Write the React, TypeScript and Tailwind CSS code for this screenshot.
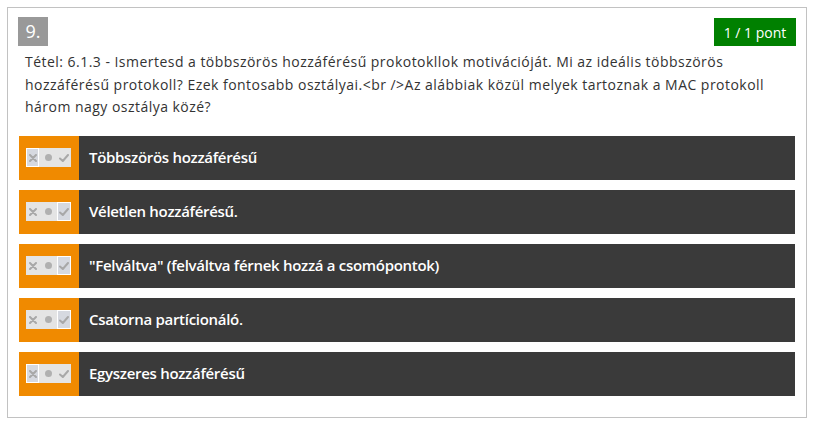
import React from 'react';

type Choice = 'no' | 'yes';

const options: { text: string; choice: Choice }[] = [
  { text: 'Többszörös hozzáférésű', choice: 'no' },
  { text: 'Véletlen hozzáférésű.', choice: 'yes' },
  { text: '"Felváltva" (felváltva férnek hozzá a csomópontok)', choice: 'yes' },
  { text: 'Csatorna partícionáló.', choice: 'yes' },
  { text: 'Egyszeres hozzáférésű', choice: 'no' },
];

const Toggle: React.FC<{ choice: Choice }> = ({ choice }) => (
  <div className="flex h-[19px] w-[45px] items-center justify-between bg-[#e4e4e4]">
    <div
      className={`flex h-[19px] w-[13px] items-center justify-center ${
        choice === 'no' ? 'border border-white bg-[#d6d9e0]' : ''
      }`}
    >
      <svg width="8" height="8" viewBox="0 0 8 8">
        <path d="M1 1 L7 7 M7 1 L1 7" stroke="#a8a8a8" strokeWidth="2" strokeLinecap="round" />
      </svg>
    </div>
    <div className="h-[7px] w-[7px] rounded-full bg-[#b0b0b0]" />
    <div
      className={`flex h-[19px] w-[14px] items-center justify-center ${
        choice === 'yes' ? 'border border-white bg-[#d6d9e0]' : ''
      }`}
    >
      <svg width="10" height="8" viewBox="0 0 10 8">
        <path d="M1 4.5 L3.8 7 L9 1" stroke="#a8a8a8" strokeWidth="2" fill="none" strokeLinecap="round" strokeLinejoin="round" />
      </svg>
    </div>
  </div>
);

const App: React.FC = () => {
  return (
    <div className="min-h-[422px] bg-white p-[7px] font-['Open_Sans',sans-serif]">
      <div className="w-[800px] h-[411px] border border-[#c2c2c2] bg-white pl-[10px] pr-[10px] pt-[9px]">
        <div className="flex items-start justify-between">
          <div className="flex h-[29px] w-[30px] items-center justify-center bg-[#999999] text-[18px] text-white">
            9.
          </div>
          <div className="mt-px flex h-[28px] w-[82px] items-center justify-center bg-[#008000] text-[14px] text-white">
            1 / 1 pont
          </div>
        </div>
        <p className="mt-[5px] whitespace-nowrap pl-[7px] text-[14px] leading-[22.5px] tracking-[0.47px] text-[#333333]">
          Tétel: 6.1.3 - Ismertesd a többszörös hozzáférésű prokotokllok motivációját. Mi az ideális többszörös
          <br />
          hozzáférésű protokoll? Ezek fontosabb osztályai.&lt;br /&gt;Az alábbiak közül melyek tartoznak a MAC protokoll
          <br />
          három nagy osztálya közé?
        </p>
        <div className="mt-[17px] flex flex-col gap-[10px] pl-px">
          {options.map((o) => (
            <div key={o.text} className="flex h-[44px] w-[776px] bg-[#3a3a3a]">
              <div className="flex w-[60px] items-center pl-[7px] bg-[#f08a00]">
                <Toggle choice={o.choice} />
              </div>
              <div className="flex items-center pl-[10px] text-[15px] font-semibold tracking-[-0.3px] text-white">
                {o.text}
              </div>
            </div>
          ))}
        </div>
      </div>
    </div>
  );
};

export default App;
